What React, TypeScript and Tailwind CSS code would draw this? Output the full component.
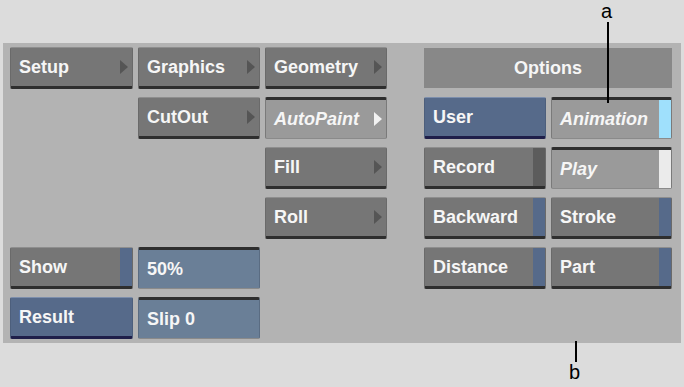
import React from "react";

type Variant = "gray" | "blue" | "sel" | "field";

interface BtnProps {
  label: string;
  variant?: Variant;
  italic?: boolean;
  arrow?: boolean;
  strip?: string;
  className?: string;
}

const variantClass: Record<Variant, string> = {
  gray: "bg-[#767676] border-t border-t-[#8e8e8e] border-x border-x-[#6a6a6a] border-b-[3px] border-b-[#2e2e2e]",
  blue: "bg-[#566a8a] border-t border-t-[#7c8eac] border-x border-x-[#4d5f7c] border-b-[3px] border-b-[#1f1f4a]",
  sel: "bg-[#9a9a9a] border-t-[3px] border-t-[#2e2e2e] border-x border-x-[#7a7a7a] border-b border-b-[#8a8a8a]",
  field: "bg-[#6a7f97] border-t-[3px] border-t-[#2e2e2e] border-x border-x-[#5a6c82] border-b border-b-[#8a8a8a]",
};

function Btn({ label, variant = "gray", italic, arrow, strip, className = "" }: BtnProps) {
  const arrowColor = variant === "sel" ? "#f2f2f2" : "#555555";
  return (
    <div className={`flex h-[42px] items-stretch rounded-[2px] ${variantClass[variant]} ${className}`}>
      <span
        className={`flex flex-1 items-center pl-[8px] text-[18px] font-bold leading-none text-[#f6f6f6] ${italic ? "italic" : ""}`}
      >
        {label}
      </span>
      {arrow && (
        <span className="flex items-center pr-[4px]">
          <svg width="8" height="14" viewBox="0 0 8 14">
            <polygon points="0,0 8,7 0,14" fill={arrowColor} />
          </svg>
        </span>
      )}
      {strip && <span className={`w-[12px] ${strip}`}></span>}
    </div>
  );
}

export default function App() {
  return (
    <div
      className="relative h-[387px] w-[684px] overflow-hidden bg-[#dcdcdc] pt-[43px] pl-[3px]"
      style={{ fontFamily: '"Liberation Sans", Arial, sans-serif' }}
    >
      {/* Panel */}
      <div className="h-[300px] w-[678px] bg-[#b3b3b3] pt-[4px] pl-[7px]">
        <div className="grid grid-cols-[123px_122px_122px_27px_122px_121px] grid-rows-[42px_42px_42px_42px_42px_42px] gap-x-[5px] gap-y-[8px]">
          <Btn label="Setup" arrow className="col-start-1 row-start-1" />
          <Btn label="Graphics" arrow className="col-start-2 row-start-1" />
          <Btn label="Geometry" arrow className="col-start-3 row-start-1" />
          <div className="col-start-5 col-span-2 row-start-1 mt-[1px] flex h-[40px] items-center justify-center bg-[#888888] text-[18px] font-bold text-[#f6f6f6]">
            Options
          </div>

          <Btn label="CutOut" arrow className="col-start-2 row-start-2" />
          <Btn label="AutoPaint" variant="sel" italic arrow className="col-start-3 row-start-2" />
          <Btn label="User" variant="blue" className="col-start-5 row-start-2" />
          <Btn label="Animation" variant="sel" italic strip="bg-[#9fe0fc]" className="col-start-6 row-start-2" />

          <Btn label="Fill" arrow className="col-start-3 row-start-3" />
          <Btn label="Record" strip="bg-[#5c5c5c]" className="col-start-5 row-start-3" />
          <Btn label="Play" variant="sel" italic strip="bg-[#ebebeb]" className="col-start-6 row-start-3" />

          <Btn label="Roll" arrow className="col-start-3 row-start-4" />
          <Btn label="Backward" strip="bg-[#566a8a]" className="col-start-5 row-start-4" />
          <Btn label="Stroke" strip="bg-[#566a8a]" className="col-start-6 row-start-4" />

          <Btn label="Show" strip="bg-[#566a8a]" className="col-start-1 row-start-5" />
          <Btn label="50%" variant="field" className="col-start-2 row-start-5" />
          <Btn label="Distance" strip="bg-[#566a8a]" className="col-start-5 row-start-5" />
          <Btn label="Part" strip="bg-[#566a8a]" className="col-start-6 row-start-5" />

          <Btn label="Result" variant="blue" className="col-start-1 row-start-6" />
          <Btn label="Slip 0" variant="field" className="col-start-2 row-start-6" />
        </div>
      </div>

      {/* Callouts */}
      <div className="absolute left-[601px] top-[1px] text-[20px] leading-none text-black">a</div>
      <div className="absolute left-[607px] top-[22px] h-[81px] w-[2px] bg-black"></div>
      <div className="absolute left-[575px] top-[341px] h-[21px] w-[2px] bg-black"></div>
      <div className="absolute left-[569px] top-[362px] text-[20px] leading-none text-black">b</div>
    </div>
  );
}
